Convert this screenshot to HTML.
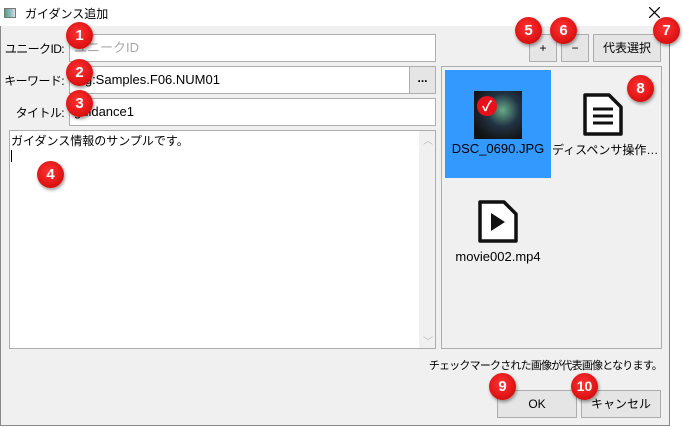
<!DOCTYPE html>
<html><head><meta charset="utf-8"><style>
*{box-sizing:border-box;margin:0;padding:0}
body{width:684px;height:427px;background:#fff;position:relative;overflow:hidden;font-family:"Liberation Sans","Noto Sans CJK JP",sans-serif;font-size:12px;color:#000}
.abs{position:absolute;white-space:nowrap}
.win{left:0;top:0;width:670px;height:426px;border:1px solid #888;border-top:none;background:#f0f0f0}
.tb{left:0;top:0;width:670px;height:26px;background:#fff}
.inp{background:#fff;border:1px solid #adadad;height:28px;line-height:26px;padding-left:4px;font-size:13px}
.btn{background:#e5e5e5;border:1px solid #adadad;text-align:center;line-height:26px;height:28px;font-size:12px}
.lbl{text-align:right;width:80px;font-size:12px;letter-spacing:-0.6px}
.b{width:27px;height:27px;border-radius:50%;background:radial-gradient(circle at 45% 40%,#f33 0,#e01515 60%,#b00 100%);color:#fff;font-weight:bold;font-size:15px;text-align:center;line-height:27px;box-shadow:1px 2px 3px rgba(0,0,0,.4)}
</style></head><body>
<div class="abs win"></div>
<div class="abs tb"></div>
<div class="abs" style="left:4px;top:8px;width:12px;height:10px;border:1px solid #777;background:linear-gradient(90deg,#4a7 0,#9bc 60%,#ddd 100%)"></div>
<div class="abs" style="left:25px;top:5px;font-size:12px">ガイダンス追加</div>
<svg class="abs" style="left:649px;top:7px" width="11" height="11" viewBox="0 0 11 11"><path d="M0 0L11 11M11 0L0 11" stroke="#000" stroke-width="1.2"/></svg>

<div class="abs lbl" style="left:-16px;top:40px">ユニークID:</div>
<div class="abs inp" style="left:69px;top:34px;width:367px;color:#aaa">ユニークID</div>
<div class="abs lbl" style="left:-16px;top:72px">キーワード:</div>
<div class="abs inp" style="left:69px;top:66px;width:341px">tag:Samples.F06.NUM01</div>
<div class="abs btn" style="left:409px;top:66px;width:27px;line-height:22px;font-weight:bold">...</div>
<div class="abs lbl" style="left:-16px;top:104px">タイトル:</div>
<div class="abs inp" style="left:69px;top:98px;width:367px">guidance1</div>

<div class="abs" style="left:9px;top:130px;width:427px;height:219px;background:#fff;border:1px solid #adadad"></div>
<div class="abs" style="left:419px;top:131px;width:16px;height:217px;background:#f0f0f0"></div>
<div class="abs" style="left:423px;top:132px;color:#bbb;font-size:10px">︿</div>
<div class="abs" style="left:423px;top:333px;color:#bbb;font-size:10px">﹀</div>
<div class="abs" style="left:11px;top:132px;font-size:12px">ガイダンス情報のサンプルです。</div>
<div class="abs" style="left:11px;top:150px;width:1px;height:12px;background:#000"></div>

<div class="abs btn" style="left:529px;top:34px;width:28px">+</div>
<div class="abs btn" style="left:561px;top:34px;width:28px">−</div>
<div class="abs btn" style="left:593px;top:34px;width:68px">代表選択</div>

<div class="abs" style="left:441px;top:66px;width:221px;height:283px;border:1px solid #adadad;background:#f0f0f0"></div>
<div class="abs" style="left:445px;top:70px;width:106px;height:108px;background:#3399ff"></div>
<div class="abs" style="left:474px;top:91px;width:48px;height:48px;background:radial-gradient(circle at 60% 40%,#6a8 0,#234 40%,#111 80%)"></div>
<div class="abs" style="left:477px;top:96px;width:20px;height:20px;border-radius:50%;background:#e8101a;color:#fff;text-align:center;line-height:20px;font-weight:bold;font-size:14px">✓</div>
<div class="abs" style="left:445px;top:141px;width:106px;text-align:center;font-size:13px">DSC_0690.JPG</div>
<svg class="abs" style="left:582px;top:92px" width="42" height="45" viewBox="0 0 42 45"><path d="M3 3h24l12 12v27H3z" fill="#fff" stroke="#111" stroke-width="3.5" stroke-linejoin="round"/><path d="M11 17h20M11 24h20M11 31h20" stroke="#111" stroke-width="3"/></svg>
<div class="abs" style="left:552px;top:141px;width:108px;font-size:12px;overflow:hidden">ディスペンサ操作…</div>
<svg class="abs" style="left:477px;top:199px" width="42" height="45" viewBox="0 0 42 45"><path d="M3 3h24l12 12v27H3z" fill="#fff" stroke="#111" stroke-width="3.5" stroke-linejoin="round"/><path d="M14 14l14 9-14 9z" fill="#111"/></svg>
<div class="abs" style="left:445px;top:249px;width:106px;text-align:center;font-size:13px">movie002.mp4</div>

<div class="abs" style="left:400px;top:357px;width:262px;text-align:right;font-size:11px;letter-spacing:-0.8px">チェックマークされた画像が代表画像となります。</div>
<div class="abs btn" style="left:497px;top:390px;width:80px">OK</div>
<div class="abs btn" style="left:581px;top:390px;width:80px">キャンセル</div>

<div class="abs b" style="left:66px;top:22px">1</div>
<div class="abs b" style="left:66px;top:59px">2</div>
<div class="abs b" style="left:66px;top:90px">3</div>
<div class="abs b" style="left:37px;top:161px">4</div>
<div class="abs b" style="left:515px;top:17px">5</div>
<div class="abs b" style="left:550px;top:17px">6</div>
<div class="abs b" style="left:653px;top:17px">7</div>
<div class="abs b" style="left:627px;top:75px">8</div>
<div class="abs b" style="left:489px;top:373px">9</div>
<div class="abs b" style="left:571px;top:373px;font-size:14px">10</div>
</body></html>
